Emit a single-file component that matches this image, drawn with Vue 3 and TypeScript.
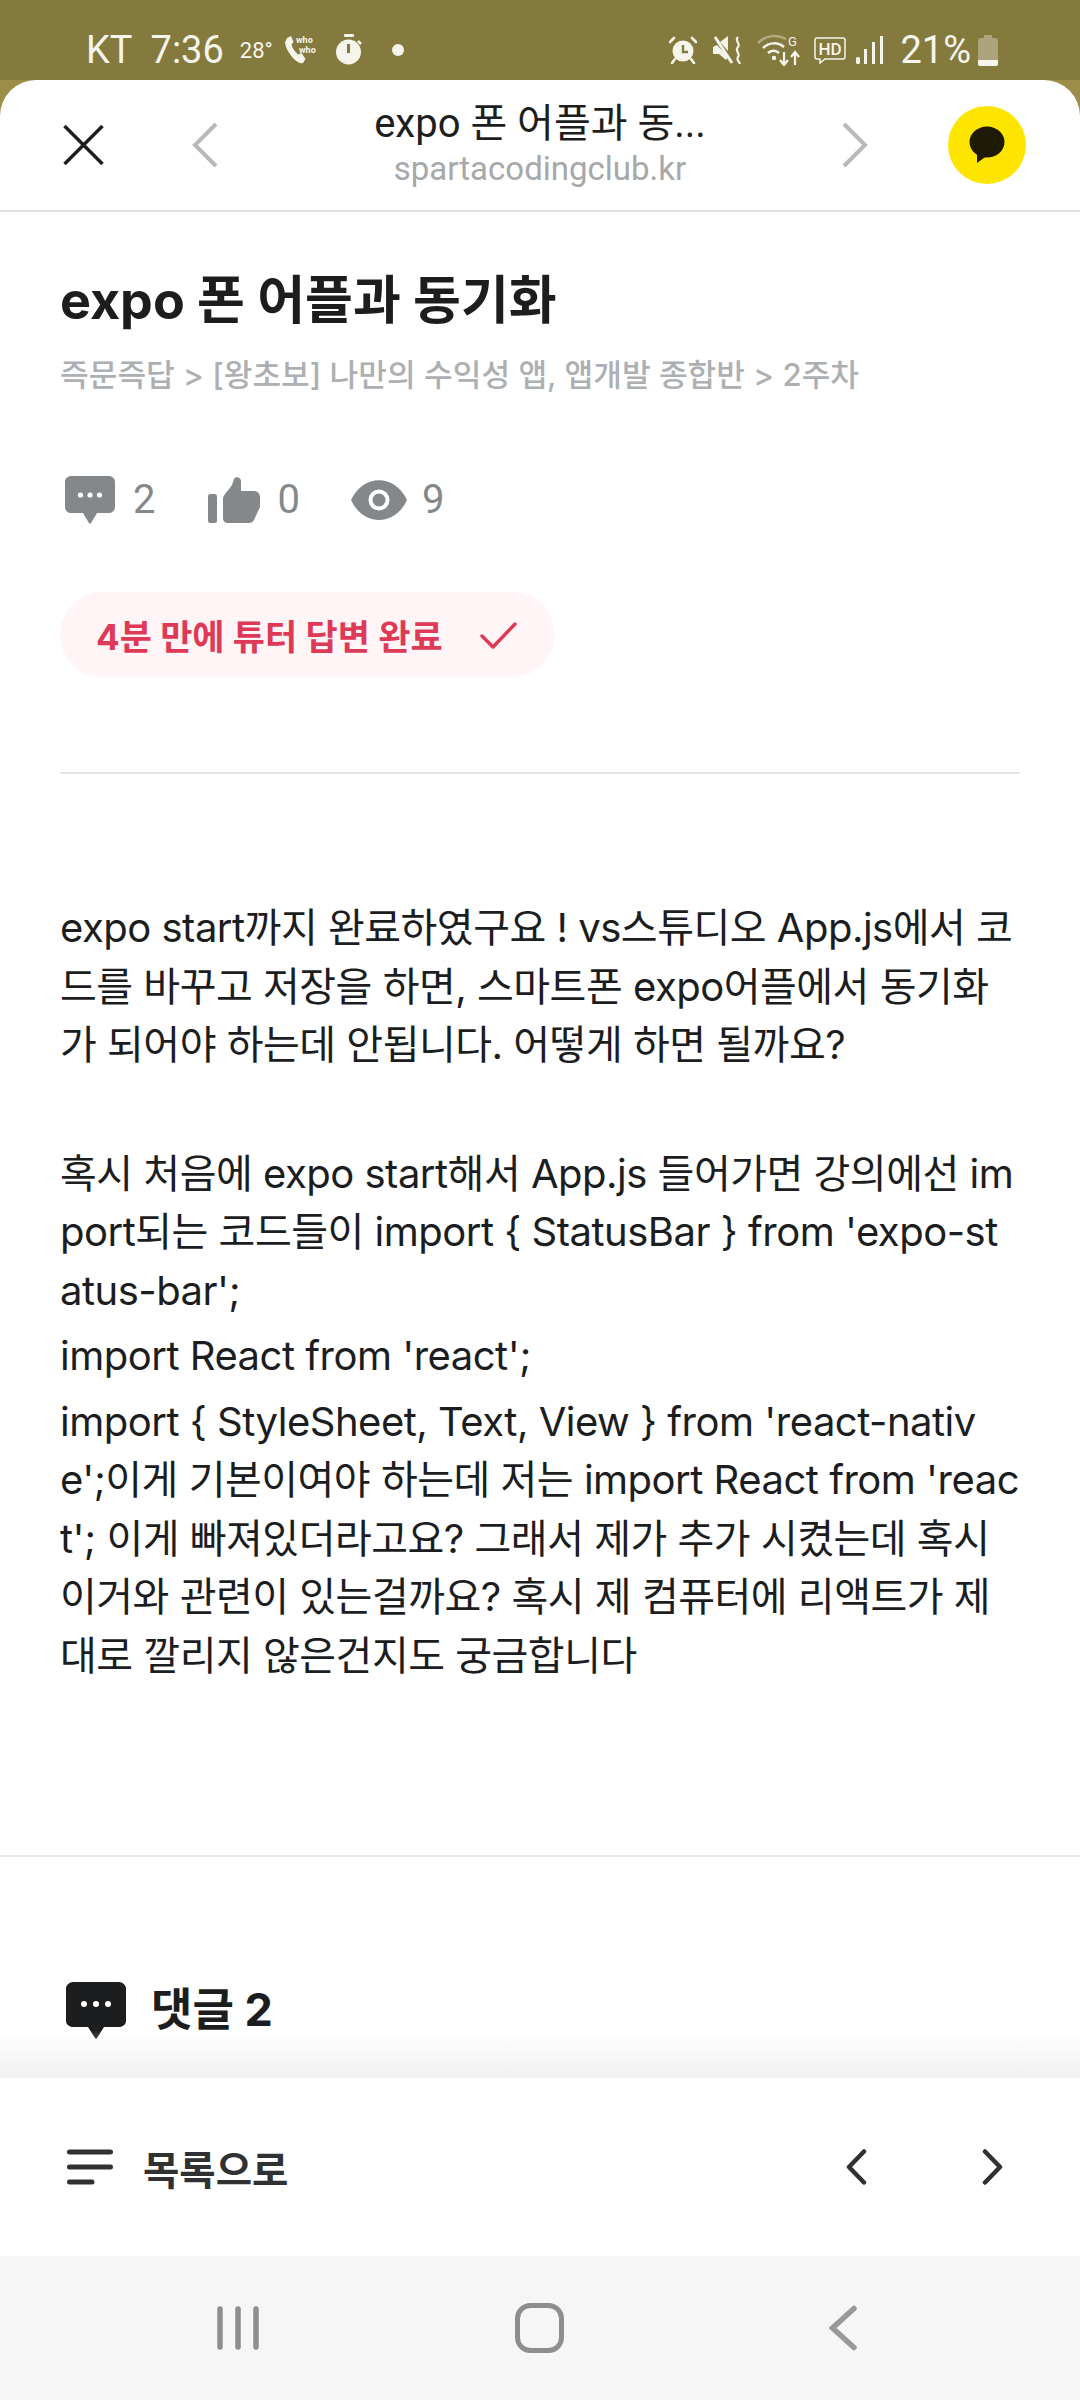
<script setup lang="ts">
const paragraphs: string[] = [
  "expo start까지 완료하였구요 ! vs스튜디오 App.js에서 코드를 바꾸고 저장을 하면, 스마트폰 expo어플에서 동기화가 되어야 하는데 안됩니다. 어떻게 하면 될까요?",
];
const second: string[] = [
  "혹시 처음에 expo start해서 App.js 들어가면 강의에선 import되는 코드들이 import { StatusBar } from 'expo-st\natus-bar';",
  "import React from 'react';",
  "import { StyleSheet, Text, View } from 'react-native';이게 기본이여야 하는데 저는 import React from 'react'; 이게 빠져있더라고요? 그래서 제가 추가 시켰는데 혹시 이거와 관련이 있는걸까요? 혹시 제 컴퓨터에 리액트가 제대로 깔리지 않은건지도 궁금합니다",
];
</script>

<template>
  <div class="page">
    <div class="status">
      <span class="carrier">KT</span>
      <span class="clock">7:36</span>
      <span class="temp">28°</span>
      <svg class="ic-who" width="36" height="32" viewBox="0 0 36 32">
        <path d="M3 4 L7 2 L9.500 8 L7.500 10.500 C8.500 14.500 11 18 14.500 20.500 L17.500 19 L21.500 25 L19 29 C17 30 14 28.500 11 26 C5.500 21 1.500 13.500 1 8.500 Z" fill="#f5f5ec"/>
        <text x="12" y="9" class="who-t">who</text>
        <text x="15" y="19" class="who-t">who</text>
      </svg>
      <svg class="ic-timer" width="26" height="32" viewBox="0 0 26 32">
        <rect x="8" y="0" width="10" height="3" rx="1" fill="#f5f5ec"/>
        <circle cx="12.500" cy="18" r="12.500" fill="#f5f5ec"/>
        <path d="M22 7 L25 10" stroke="#f5f5ec" stroke-width="2.500"/>
        <rect x="11" y="10" width="3" height="9" fill="#857a3e"/>
      </svg>
      <span class="dot"></span>
      <span class="spacer"></span>
      <svg class="ic-alarm" width="28" height="28" viewBox="0 0 28 28">
        <circle cx="14" cy="15" r="10.500" fill="#f5f5ec"/>
        <path d="M1 6 L5 2 M27 6 L23 2" stroke="#f5f5ec" stroke-width="2.600" stroke-linecap="round"/>
        <path d="M6 23 L3 27 M22 23 L25 27" stroke="#f5f5ec" stroke-width="2.600" stroke-linecap="round"/>
        <path d="M14 9 V16 H19" stroke="#857a3e" stroke-width="2.400" fill="none"/>
      </svg>
      <svg class="ic-mute" width="29" height="28" viewBox="0 0 29 28">
        <path d="M0 11 L4 9 L15 21 L13 24 L6 18 H0 Z" fill="#f5f5ec"/>
        <path d="M7 6 L15 0 V15 Z" fill="#f5f5ec"/>
        <path d="M2 1 L19 27" stroke="#f5f5ec" stroke-width="3"/>
        <path d="M25 1 C21 5 28 7 25 11 C21 15 28 17 25 21 C23 24 26 25 27 28" stroke="#f5f5ec" stroke-width="2.200" fill="none"/>
      </svg>
      <svg class="ic-wifi" width="44" height="32" viewBox="0 0 44 32">
        <path d="M1 9 C9 1 20 0 29 5" stroke="#b3ab80" stroke-width="2.500" fill="none"/>
        <path d="M6 14 C12 8 21 8 27 13" stroke="#f5f5ec" stroke-width="2.500" fill="none"/>
        <path d="M11 19 C14 16 19 16 22 19" stroke="#f5f5ec" stroke-width="2.500" fill="none"/>
        <circle cx="17" cy="24" r="2.200" fill="#f5f5ec"/>
        <text x="31" y="12" class="g-t">G</text>
        <path d="M27 18 V31 M23 26 L27 31 L31 26" stroke="#f5f5ec" stroke-width="2.200" fill="none"/>
        <path d="M38 31 V18 M34 23 L38 18 L42 23" stroke="#f5f5ec" stroke-width="2.200" fill="none"/>
      </svg>
      <svg class="ic-hd" width="32" height="27" viewBox="0 0 32 27">
        <path d="M3 1 H29 C30 1 31 2 31 3 V20 C31 21 30 22 29 22 H11 L6 26 V22 H3 C2 22 1 21 1 20 V3 C1 2 2 1 3 1 Z" stroke="#f5f5ec" stroke-width="1.500" fill="none"/>
        <text x="16" y="18" text-anchor="middle" class="hd-t">HD</text>
      </svg>
      <svg class="ic-sig" width="27" height="28" viewBox="0 0 27 28">
        <rect x="0" y="21" width="4" height="7" rx="1.500" fill="#f5f5ec"/>
        <rect x="8" y="13" width="3" height="15" fill="#f5f5ec"/>
        <rect x="16" y="6" width="3" height="22" fill="#f5f5ec"/>
        <rect x="24" y="0" width="3" height="28" fill="#f5f5ec"/>
      </svg>
      <span class="batt-t">21%</span>
      <svg class="ic-batt" width="20" height="31" viewBox="0 0 20 31">
        <path d="M6 0 H14 V3 H17 C19 3 20 4 20 6 V29 C20 30 19 31 18 31 H2 C1 31 0 30 0 29 V6 C0 4 1 3 3 3 H6 Z" fill="#aba47c"/>
        <path d="M0 25 H20 V29 C20 30 19 31 18 31 H2 C1 31 0 30 0 29 Z" fill="#f5f5ec"/>
      </svg>
    </div>

    <div class="sheet">
      <header class="hdr">
        <div class="hdr-l">
          <svg class="x" width="41" height="40" viewBox="0 0 41 40">
            <path d="M1.500 1 L39.500 39 M39.500 1 L1.500 39" stroke="#1e1e1e" stroke-width="3.500"/>
          </svg>
          <svg class="chev" width="26" height="46" viewBox="0 0 26 46">
            <path d="M24 2 L3 23 L24 44" stroke="#b9b9b9" stroke-width="4" fill="none"/>
          </svg>
        </div>
        <div class="hdr-c">
          <div class="hdr-title">expo 폰 어플과 동...</div>
          <div class="hdr-sub">spartacodingclub.kr</div>
        </div>
        <div class="hdr-r">
          <svg class="chev" width="26" height="46" viewBox="0 0 26 46">
            <path d="M2 2 L23 23 L2 44" stroke="#b9b9b9" stroke-width="4" fill="none"/>
          </svg>
          <svg class="kakao" width="78" height="78" viewBox="0 0 78 78">
            <circle cx="39" cy="39" r="39" fill="#fee500"/>
            <ellipse cx="39" cy="36" rx="17.500" ry="15.500" fill="#1e1a05"/>
            <path d="M29 45 V57 L40 49 Z" fill="#1e1a05"/>
          </svg>
        </div>
      </header>

      <main class="main">
        <section class="top">
          <h1 class="title">expo 폰 어플과 동기화</h1>
          <p class="crumb">즉문즉답 &gt; [왕초보] 나만의 수익성 앱, 앱개발 종합반 &gt; 2주차</p>
          <div class="stats">
            <svg width="50" height="50" viewBox="0 0 50 50">
              <path d="M6 1 H44 C47 1 50 3.500 50 7 V32 C50 35.500 47 38 44 38 H32 L26 48 C25.500 49 24.500 49 24 48 L18 38 H6 C3 38 0 35.500 0 32 V7 C0 3.500 3 1 6 1 Z" fill="#84888b"/>
              <circle cx="15.500" cy="20" r="2.600" fill="#fff"/><circle cx="25" cy="20" r="2.600" fill="#fff"/><circle cx="34.500" cy="20" r="2.600" fill="#fff"/>
            </svg>
            <span class="num">2</span>
            <svg class="s2" width="52" height="46" viewBox="0 0 52 46">
              <rect x="0" y="17" width="9" height="29" rx="2.500" fill="#84888b"/>
              <path d="M15 22 C15 18 20 14 24 8 L26 2 C27 -1 33 0 33 4 V14 H46 C50 14 52 17 52 21 V30 L46 43 C45 45 43 46 41 46 H20 C17 46 15 44 15 41 Z" fill="#84888b"/>
            </svg>
            <span class="num n2">0</span>
            <svg class="s3" width="56" height="40" viewBox="0 0 56 40">
              <path d="M0 20 C12 -6.500 44 -6.500 56 20 C44 46.500 12 46.500 0 20 Z" fill="#84888b"/>
              <circle cx="28" cy="20" r="10.500" fill="#fff"/>
              <circle cx="28" cy="20" r="6.500" fill="#84888b"/>
            </svg>
            <span class="num n3">9</span>
          </div>
          <div class="pill">
            <span>4분 만에 튜터 답변 완료</span>
            <svg width="37" height="28" viewBox="0 0 37 28">
              <path d="M2 15 L13 26 L35 3" stroke="#de3a58" stroke-width="3.500" fill="none" stroke-linecap="round" stroke-linejoin="round"/>
            </svg>
          </div>
        </section>

        <section class="body">
          <p v-for="p in paragraphs" :key="p" class="para">{{ p }}</p>
          <div class="group">
            <p v-for="p in second" :key="p" class="para line">{{ p }}</p>
          </div>
        </section>

        <section class="comments">
          <svg width="60" height="59" viewBox="0 0 60 59">
            <path d="M7 1 H53 C56.500 1 60 4 60 7.500 V40 C60 43.500 56.500 46 53 46 H38 L31 57 C30.500 58 29.500 58 29 57 L22 46 H7 C3.500 46 0 43.500 0 40 V7.500 C0 4 3.500 1 7 1 Z" fill="#1c1d1f"/>
            <circle cx="18" cy="23" r="3" fill="#fff"/><circle cx="30" cy="23" r="3" fill="#fff"/><circle cx="42" cy="23" r="3" fill="#fff"/>
          </svg>
          <span class="c-label">댓글 2</span>
        </section>
      </main>

      <footer class="foot">
        <div class="fade"></div>
        <svg width="46" height="36" viewBox="0 0 46 36">
          <path d="M2.500 3 H43.500 M2.500 18 H43.500 M2.500 33 H25" stroke="#2f3133" stroke-width="5" stroke-linecap="round"/>
        </svg>
        <span class="back">목록으로</span>
        <span class="spacer"></span>
        <svg class="pg" width="21" height="36" viewBox="0 0 21 36">
          <path d="M18 2.500 L3 18 L18 33.500" stroke="#2f3133" stroke-width="4.500" fill="none" stroke-linecap="round" stroke-linejoin="round"/>
        </svg>
        <svg class="pg p2" width="21" height="36" viewBox="0 0 21 36">
          <path d="M3 2.500 L18 18 L3 33.500" stroke="#2f3133" stroke-width="4.500" fill="none" stroke-linecap="round" stroke-linejoin="round"/>
        </svg>
      </footer>
    </div>

    <nav class="nav">
      <svg width="42" height="44" viewBox="0 0 42 44">
        <path d="M3 3 V41 M21 3 V41 M39 3 V41" stroke="#8e8e8e" stroke-width="5.500" stroke-linecap="round"/>
      </svg>
      <svg class="home" width="49" height="50" viewBox="0 0 49 50">
        <rect x="2.500" y="2.500" width="44" height="45" rx="13" stroke="#8e8e8e" stroke-width="5" fill="none"/>
      </svg>
      <svg class="nav-back" width="28" height="46" viewBox="0 0 28 46">
        <path d="M25 3.500 L3.500 23 L25 42.500" stroke="#999" stroke-width="5.500" fill="none" stroke-linecap="round"/>
      </svg>
    </nav>
  </div>
</template>

<style>
html, body { margin: 0; padding: 0; }
</style>

<style scoped>
.page {
  width: 1080px;
  height: 2400px;
  display: flex;
  flex-direction: column;
  overflow: hidden;
  background: #9c8e48;
  font-family: Inter, "Noto Sans CJK KR", sans-serif;
  color: #1c1d1f;
}
p, h1 { margin: 0; }
.status {
  height: 80px;
  flex: none;
  background: #857a3e;
  display: flex;
  align-items: center;
  padding: 20px 82px 0 86px;
  box-sizing: border-box;
  font-family: Roboto, sans-serif;
  color: #f5f5ec;
}
.carrier, .clock, .batt-t { font-size: 38px; line-height: 44px; }
.clock { margin-left: 18px; }
.temp { font-size: 22px; margin-left: 16px; }
.status svg { flex: none; }
.ic-who { margin-left: 11px; }
.ic-timer { margin-left: 16px; }
.dot { width: 12px; height: 12px; border-radius: 50%; background: #f5f5ec; margin-left: 30px; }
.spacer { flex: 1; }
.ic-mute { margin-left: 16px; }
.ic-wifi { margin-left: 15px; }
.ic-hd { margin-left: 13px; }
.ic-sig { margin-left: 10px; }
.batt-t { margin-left: 17px; }
.ic-batt { margin-left: 7px; }
.who-t { font-family: Roboto, sans-serif; font-size: 9px; font-weight: 700; fill: #f5f5ec; }
.g-t { font-family: Roboto, sans-serif; font-size: 13px; fill: #f5f5ec; }
.hd-t { font-family: Roboto, sans-serif; font-size: 17px; font-weight: 500; fill: #f5f5ec; }

.sheet {
  flex: 1;
  min-height: 0;
  display: flex;
  flex-direction: column;
  background: #fff;
  border-radius: 36px 36px 0 0;
  overflow: hidden;
}
.hdr {
  flex: none;
  height: 132px;
  box-sizing: border-box;
  border-bottom: 2px solid #e1e1e1;
  display: grid;
  grid-template-columns: 1fr auto 1fr;
  align-items: center;
}
.hdr-l { display: flex; align-items: center; padding-left: 63px; gap: 88px; }
.hdr-r { display: flex; align-items: center; justify-content: flex-end; padding-right: 54px; gap: 80px; }
.hdr-c { text-align: center; font-family: Roboto, "Noto Sans CJK KR", sans-serif; }
.hdr-title { font-size: 40px; line-height: 48px; color: #1e1e1e; }
.hdr-sub { font-size: 33px; line-height: 42px; color: #a6a8aa; }

.main { flex: 1; min-height: 0; overflow: hidden; }
.top {
  margin: 0 60px;
  padding-top: 57px;
  height: 562px;
  box-sizing: border-box;
  border-bottom: 2px solid #e6e6e6;
}
.title { font-size: 52px; line-height: 64px; font-weight: 700; color: #1c1d1f; }
.crumb { margin-top: 22px; font-size: 31.200px; line-height: 40px; font-weight: 500; color: #adb0b3; }
.stats {
  margin-top: 79px;
  height: 52px;
  display: flex;
  align-items: center;
  color: #84888b;
  padding-left: 5px;
  font-family: Roboto, sans-serif;
}
.num { font-size: 40px; line-height: 50px; margin-left: 18px; }
.s2 { margin-left: 53px; }
.s3 { margin-left: 51px; }
.n2 { margin-left: 17px; }
.n3 { margin-left: 15px; }
.pill {
  margin-top: 66px;
  width: 495px;
  height: 85px;
  box-sizing: border-box;
  padding: 0 0 0 36px;
  border-radius: 43px;
  background: #fff5f6;
  display: flex;
  align-items: center;
  gap: 37px;
  color: #de3a58;
  font-size: 35px;
  font-weight: 700;
}
.body {
  height: 1083px;
  box-sizing: border-box;
  padding: 125px 60px 0;
  border-bottom: 2px solid #e6e6e6;
  font-size: 40px;
  letter-spacing: -0.500px;
  line-height: 58.500px;
  color: #1c1d1f;
  word-break: break-all;
}
.para { white-space: pre-line; }
.group { margin-top: 70px; }
.line + .line { margin-top: 7px; }
.comments {
  padding: 124px 0 0 66px;
  display: flex;
  align-items: flex-start;
  gap: 25px;
  font-size: 45px;
  line-height: 56px;
  font-weight: 700;
}
.c-label { margin-top: 1px; }
.foot {
  flex: none;
  position: relative;
  height: 178px;
  display: flex;
  align-items: center;
  padding: 0 77px 0 67px;
  background: #fff;
}
.fade {
  position: absolute;
  left: 0;
  right: 0;
  top: -48px;
  height: 48px;
  background: linear-gradient(to bottom, rgba(240,240,240,0), #f1f1f1);
}
.back { margin-left: 30px; font-size: 39.500px; font-weight: 700; color: #2f3133; }
.p2 { margin-left: 115px; }
.nav {
  flex: none;
  height: 144px;
  background: #f6f6f6;
  display: flex;
  align-items: center;
  padding-left: 217px;
}
.home { margin-left: 256px; }
.nav-back { margin-left: 265px; }
</style>
